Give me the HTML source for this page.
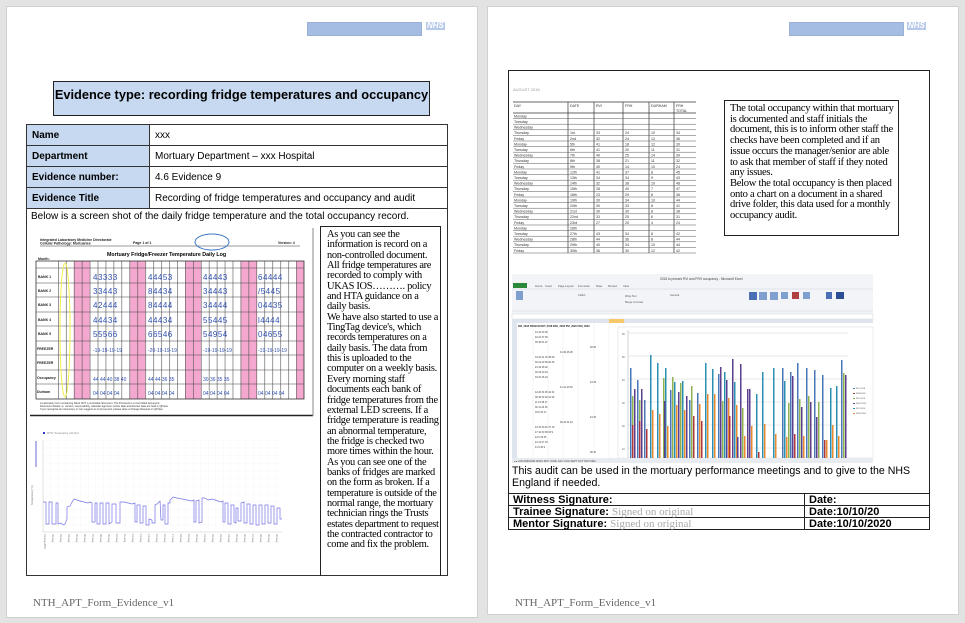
<!DOCTYPE html>
<html><head><meta charset="utf-8">
<style>
*{margin:0;padding:0;box-sizing:border-box}
body{width:965px;height:623px;background:#e3e3e3;position:relative;overflow:hidden;font-family:"Liberation Sans",Arial,sans-serif;color:#000}
.a{position:absolute}
.page{position:absolute;background:#fff;border:1px solid #d0d0d0}
.bar{position:absolute;background:#a5bde3;border:1px solid #9ab0d6}
.nhs{position:absolute;font:bold italic 8px "Liberation Sans",sans-serif;color:#fff;background:#b6c9ea;padding:0 1px;line-height:8px}
.foot{position:absolute;font:11px "Liberation Serif",serif;color:#666}
.serif{font-family:"Liberation Serif",serif}
table.t{position:absolute;border-collapse:collapse}
table.t td{border:1px solid #333;font-size:10px;padding:0 5px;height:21px}
table.t td.l{background:#c6d9f1;font-weight:bold;width:123px}
.sig td{font-size:11px!important;font-weight:bold;height:12px!important;line-height:10px;padding:0 4px!important;border:1px solid #222!important}
.g{color:#aaa;font-weight:normal;font-family:"Liberation Serif",serif}
</style></head><body>

<!-- LEFT PAGE -->
<div class="page" style="left:6px;top:6px;width:472px;height:612px"></div>
<div class="bar" style="left:307px;top:22px;width:115px;height:14px"></div>
<div class="nhs" style="left:426px;top:22px">NHS</div>
<div class="a" style="left:53px;top:81px;width:377px;height:35px;background:#c6d9f1;border:1px solid #222;font-weight:bold;font-size:12.8px;text-align:center;padding-top:5px;white-space:nowrap">Evidence type: recording fridge temperatures and occupancy</div>

<table class="t" style="left:26px;top:124px;width:422px">
<tr><td class="l">Name</td><td>xxx</td></tr>
<tr><td class="l">Department</td><td>Mortuary Department – xxx Hospital</td></tr>
<tr><td class="l">Evidence number:</td><td>4.6 Evidence 9</td></tr>
<tr><td class="l">Evidence Title</td><td>Recording of fridge temperatures and occupancy and audit</td></tr>
</table>
<div class="a" style="left:26px;top:207px;width:422px;height:369px;border:1px solid #333;border-top:none"></div>
<div class="a" style="left:31px;top:211px;font-size:10px">Below is a screen shot of the daily fridge temperature and the total occupancy record.</div>

<!-- text box -->
<div class="a serif" style="left:320px;top:226px;width:121px;height:350px;border:1px solid #222;border-bottom:none;padding:3px 0 0 6px;font-size:10.4px;line-height:10.35px;letter-spacing:-0.3px;overflow:hidden">As you can see the information is record on a non-controlled document. All fridge temperatures are recorded to comply with UKAS IOS………. policy and HTA guidance on a daily basis.<br>We have also started to use a TingTag device's, which records temperatures on a daily basis. The data from this is uploaded to the computer on a weekly basis. Every morning staff documents each bank of fridge temperatures from the external LED screens. If a fridge temperature is reading an abnormal temperature, the fridge is checked two more times within the hour.<br>As you can see one of the banks of fridges are marked on the form as broken. If a temperature is outside of the normal range, the mortuary technician rings the Trusts estates department to request the contracted contractor to come and fix the problem.</div>

<!-- form image -->
<svg class="a" style="left:30px;top:226px" width="285" height="192" viewBox="30 226 285 192">
<defs>
<pattern id="vc" x="58" y="0" width="7.94" height="10" patternUnits="userSpaceOnUse"><rect x="0" y="0" width="0.6" height="10" fill="#555"/></pattern>
</defs>
<rect x="30" y="226" width="283" height="190" fill="#fff"/>
<line x1="30" y1="415.5" x2="313" y2="415.5" stroke="#222" stroke-width="1.5"/>
<line x1="313" y1="228" x2="313" y2="416" stroke="#888"/>
<g fill="#f4a8cf">
<rect x="73.9" y="261" width="15.9" height="138"/><rect x="129.5" y="261" width="15.9" height="138"/><rect x="185" y="261" width="15.9" height="138"/><rect x="240.6" y="261" width="15.9" height="138"/><rect x="296.2" y="261" width="7.9" height="138"/>
</g>
<rect x="58" y="261" width="246" height="138" fill="url(#vc)"/>
<rect x="36" y="261" width="268" height="138" fill="none" stroke="#333" stroke-width="0.8"/>
<g stroke="#444" stroke-width="0.6">
<line x1="36" y1="268" x2="304" y2="268"/><line x1="36" y1="283" x2="304" y2="283"/><line x1="36" y1="297" x2="304" y2="297"/><line x1="36" y1="312" x2="304" y2="312"/><line x1="36" y1="326" x2="304" y2="326"/><line x1="36" y1="341" x2="304" y2="341"/><line x1="36" y1="355" x2="304" y2="355"/><line x1="36" y1="370" x2="304" y2="370"/><line x1="36" y1="384" x2="304" y2="384"/>
</g>
<g font-size="3.5" font-family="Liberation Sans" font-weight="bold" fill="#222">
<text x="40" y="241">Integrated Laboratory Medicine Directorate</text><text x="40" y="244.5">Cellular Pathology: Mortuaries</text>
<text x="133" y="244">Page 1 of 1</text><text x="278" y="244">Version: 4</text>
<text x="38" y="260">Month:</text>
<text x="38" y="278">BANK 1</text><text x="38" y="292">BANK 2</text><text x="38" y="306">BANK 3</text><text x="38" y="321">BANK 4</text><text x="38" y="335">BANK 5</text><text x="37" y="350">FREEZER</text><text x="37" y="364">FREEZER</text><text x="37" y="379">Occupancy</text><text x="37" y="393">Durham</text>
</g>
<line x1="40" y1="246" x2="300" y2="246" stroke="#333" stroke-width="0.5"/>
<text x="107" y="256" font-size="5.3" font-weight="bold" font-family="Liberation Sans">Mortuary Fridge/Freezer Temperature Daily Log</text>
<ellipse cx="212" cy="242" rx="17" ry="8" fill="none" stroke="#3b78c4" stroke-width="1"/>
<ellipse cx="65" cy="330" rx="5" ry="67" fill="none" stroke="#f2f04a" stroke-width="1"/>
<g font-size="8" fill="#3050b0" font-family="Liberation Sans" letter-spacing="0.5">
<text x="93" y="280">43333</text><text x="148" y="280">44453</text><text x="203" y="280">44443</text><text x="258" y="280">64444</text>
<text x="93" y="294">33443</text><text x="148" y="294">84434</text><text x="203" y="294">34443</text><text x="258" y="294">/5445</text>
<text x="93" y="308">42444</text><text x="148" y="308">84444</text><text x="203" y="308">34444</text><text x="258" y="308">04435</text>
<text x="93" y="323">44434</text><text x="148" y="323">44434</text><text x="203" y="323">55445</text><text x="258" y="323">l4444</text>
<text x="93" y="337">55566</text><text x="148" y="337">66546</text><text x="203" y="337">54954</text><text x="258" y="337">04655</text>
</g>
<g font-size="5" fill="#3050b0"><text x="93" y="352">-19-19-19-19</text><text x="148" y="352">-20-19-19-19</text><text x="203" y="352">-19-19-19-19</text><text x="258" y="352">-19-19-19-19</text>
<text x="93" y="381">44 44 40 38 40</text><text x="148" y="381">44 44 36 35</text><text x="203" y="381">30 36 35 35</text>
<text x="93" y="395">04 04 04 04</text><text x="148" y="395">04 04 04 04</text><text x="203" y="395">04 04 04 04</text><text x="258" y="395">04 04 04 04</text></g>
<g font-size="2.6" fill="#333"><text x="40" y="404">A Laboratory form containing blank NOT a controlled document. The Protocols is a Controlled document.</text><text x="40" y="407">Document details i.e. version, responsibility, calendar approver, Active date and Review date are held in QPulse</text><text x="40" y="410">If you recognise an inaccuracy or can suggest an improvement, please raise a Change Request on QPulse</text></g>
</svg>

<!-- temperature graph -->
<svg class="a" style="left:30px;top:425px" width="260" height="130" viewBox="30 425 260 130">
<defs><pattern id="gg" x="43" y="440" width="7.5" height="7.7" patternUnits="userSpaceOnUse"><path d="M0 0H7.5M0 0V7.7" stroke="#efefef" stroke-width="0.5" fill="none"/></pattern></defs>
<rect x="43" y="440" width="239" height="92" fill="url(#gg)"/>
<line x1="43" y1="440" x2="43" y2="532" stroke="#ccc" stroke-width="0.5"/>
<line x1="43" y1="532" x2="282" y2="532" stroke="#ccc" stroke-width="0.5"/>
<rect x="43" y="432" width="2" height="2" fill="#33c"/><text x="47" y="434" font-size="2.5" fill="#888">MTW: Temperature (oC) Ref:</text>
<line x1="36" y1="441" x2="36" y2="467" stroke="#44c" stroke-width="0.8"/>
<polyline fill="none" stroke="#7474e4" stroke-width="0.7" points="43,502 46,502 46,524 49,524 49,502 52,502 52,524 56,524 56,503 58,503 58,524 61,523 63,525 65,524 67,519 67,507 70,506 72,502 74,499 77,500 80,501 84,502 88,503 90,502 92,503 92,522 95,522 95,503 97,503 97,524 100,524 100,503 103,503 103,524 106,524 106,503 109,503 109,524 112,522 112,504 116,504 116,523 120,523 120,502 124,502 128,503 132,504 135,503 135,522 137,522 137,505 140,505 140,523 143,523 143,506 146,506 146,525 149,525 149,519 152,520 152,523 155,523 155,505 157,504 160,501 161,520 163,520 163,505 165,505 165,524 168,524 168,503 170,503 170,500 173,497 177,498 182,499 187,500 192,501 194,500 194,522 196,522 196,501 199,500 199,523 202,522 202,498 205,498 208,500 212,499 215,500 218,501 221,502 223,501 223,522 225,522 225,503 228,503 228,524 231,524 231,505 234,505 234,522 236,523 236,508 238,508 238,521 241,521 241,503 244,502 244,523 247,523 247,504 250,504 250,524 253,524 253,505 256,505 256,525 259,525 259,505 262,505 262,524 265,524 265,505 268,505 268,523 271,523 271,506 274,506 274,524 277,524 277,508 280,508 280,519 282,519"/>
<g font-size="2.6" fill="#777">
<text x="44" y="534" transform="rotate(90 44 534)">01-Aug-2019</text><text x="52" y="534" transform="rotate(90 52 534)">02-Aug</text><text x="60" y="534" transform="rotate(90 60 534)">03-Aug</text><text x="68" y="534" transform="rotate(90 68 534)">04-Aug</text><text x="76" y="534" transform="rotate(90 76 534)">05-Aug</text><text x="84" y="534" transform="rotate(90 84 534)">06-Aug</text><text x="92" y="534" transform="rotate(90 92 534)">07-Aug</text><text x="100" y="534" transform="rotate(90 100 534)">08-Aug</text><text x="108" y="534" transform="rotate(90 108 534)">09-Aug</text><text x="116" y="534" transform="rotate(90 116 534)">10-Aug</text><text x="124" y="534" transform="rotate(90 124 534)">11-Aug</text><text x="132" y="534" transform="rotate(90 132 534)">12-Aug</text><text x="140" y="534" transform="rotate(90 140 534)">13-Aug</text><text x="148" y="534" transform="rotate(90 148 534)">14-Aug</text><text x="156" y="534" transform="rotate(90 156 534)">15-Aug</text><text x="164" y="534" transform="rotate(90 164 534)">16-Aug</text><text x="172" y="534" transform="rotate(90 172 534)">17-Aug</text><text x="180" y="534" transform="rotate(90 180 534)">18-Aug</text><text x="188" y="534" transform="rotate(90 188 534)">19-Aug</text><text x="196" y="534" transform="rotate(90 196 534)">20-Aug</text><text x="204" y="534" transform="rotate(90 204 534)">21-Aug</text><text x="212" y="534" transform="rotate(90 212 534)">22-Aug</text><text x="220" y="534" transform="rotate(90 220 534)">23-Aug</text><text x="228" y="534" transform="rotate(90 228 534)">24-Aug</text><text x="236" y="534" transform="rotate(90 236 534)">25-Aug</text><text x="244" y="534" transform="rotate(90 244 534)">26-Aug</text><text x="252" y="534" transform="rotate(90 252 534)">27-Aug</text><text x="260" y="534" transform="rotate(90 260 534)">28-Aug</text><text x="268" y="534" transform="rotate(90 268 534)">29-Aug</text><text x="276" y="534" transform="rotate(90 276 534)">30-Aug</text>
<text x="33" y="505" transform="rotate(-90 33 505)">Temperature (°C)</text>
</g>
</svg>

<div class="foot" style="left:33px;top:597px">NTH_APT_Form_Evidence_v1</div>

<!-- RIGHT PAGE -->
<div class="page" style="left:487px;top:6px;width:472px;height:609px"></div>
<div class="bar" style="left:789px;top:22px;width:115px;height:14px"></div>
<div class="nhs" style="left:907px;top:22px">NHS</div>
<div class="a" style="left:508px;top:70px;width:422px;height:424px;border:1px solid #222;border-bottom:none"></div>

<!-- occupancy table image -->
<svg class="a" style="left:510px;top:80px" width="190" height="176" viewBox="510 80 190 176">
<text x="513" y="91" font-size="4" fill="#999">AUGUST 2018</text>
<g stroke="#333" stroke-width="0.7">
<line x1="513" y1="102" x2="696" y2="102"/><line x1="513" y1="113" x2="696" y2="113"/>
<line x1="568" y1="102" x2="568" y2="253"/><line x1="594" y1="102" x2="594" y2="253"/><line x1="623" y1="102" x2="623" y2="253"/><line x1="649" y1="102" x2="649" y2="253"/><line x1="674" y1="102" x2="674" y2="253"/>
</g>
<g stroke="#555" stroke-width="0.5">
<line x1="513" y1="118.6" x2="696" y2="118.6"/><line x1="513" y1="124.2" x2="696" y2="124.2"/><line x1="513" y1="129.8" x2="696" y2="129.8"/><line x1="513" y1="135.4" x2="696" y2="135.4"/><line x1="513" y1="141" x2="696" y2="141"/><line x1="513" y1="146.6" x2="696" y2="146.6"/><line x1="513" y1="152.2" x2="696" y2="152.2"/><line x1="513" y1="157.8" x2="696" y2="157.8"/><line x1="513" y1="163.4" x2="696" y2="163.4"/><line x1="513" y1="169" x2="696" y2="169"/><line x1="513" y1="174.6" x2="696" y2="174.6"/><line x1="513" y1="180.2" x2="696" y2="180.2"/><line x1="513" y1="185.8" x2="696" y2="185.8"/><line x1="513" y1="191.4" x2="696" y2="191.4"/><line x1="513" y1="197" x2="696" y2="197"/><line x1="513" y1="202.6" x2="696" y2="202.6"/><line x1="513" y1="208.2" x2="696" y2="208.2"/><line x1="513" y1="213.8" x2="696" y2="213.8"/><line x1="513" y1="219.4" x2="696" y2="219.4"/><line x1="513" y1="225" x2="696" y2="225"/><line x1="513" y1="230.6" x2="696" y2="230.6"/><line x1="513" y1="236.2" x2="696" y2="236.2"/><line x1="513" y1="241.8" x2="696" y2="241.8"/><line x1="513" y1="247.4" x2="696" y2="247.4"/><line x1="513" y1="253" x2="696" y2="253"/>
</g>
<g font-size="3.6" fill="#333">
<text x="514" y="107">DAY</text><text x="570" y="107">DATE</text><text x="596" y="107">RVI</text><text x="625" y="107">FRH</text><text x="651" y="107">DURHAM</text><text x="676" y="107">FRH</text><text x="676" y="112">TOTAL</text>
<text x="514" y="117.5">Monday</text><text x="514" y="123">Tuesday</text><text x="514" y="128.6">Wednesday</text><text x="514" y="134.2">Thursday</text><text x="514" y="139.8">Friday</text><text x="514" y="145.4">Monday</text><text x="514" y="151">Tuesday</text><text x="514" y="156.6">Wednesday</text><text x="514" y="162.2">Thursday</text><text x="514" y="167.8">Friday</text><text x="514" y="173.4">Monday</text><text x="514" y="179">Tuesday</text><text x="514" y="184.6">Wednesday</text><text x="514" y="190.2">Thursday</text><text x="514" y="195.8">Friday</text><text x="514" y="201.4">Monday</text><text x="514" y="207">Tuesday</text><text x="514" y="212.6">Wednesday</text><text x="514" y="218.2">Thursday</text><text x="514" y="223.8">Friday</text><text x="514" y="229.4">Monday</text><text x="514" y="235">Tuesday</text><text x="514" y="240.6">Wednesday</text><text x="514" y="246.2">Thursday</text><text x="514" y="251.8">Friday</text>
<text x="570" y="134.2">1st</text><text x="570" y="139.8">2nd</text><text x="570" y="145.4">5th</text><text x="570" y="151">6th</text><text x="570" y="156.6">7th</text><text x="570" y="162.2">8th</text><text x="570" y="167.8">9th</text><text x="570" y="173.4">12th</text><text x="570" y="179">13th</text><text x="570" y="184.6">14th</text><text x="570" y="190.2">15th</text><text x="570" y="195.8">16th</text><text x="570" y="201.4">19th</text><text x="570" y="207">20th</text><text x="570" y="212.6">21st</text><text x="570" y="218.2">22nd</text><text x="570" y="223.8">23rd</text><text x="570" y="229.4">26th</text><text x="570" y="235">27th</text><text x="570" y="240.6">28th</text><text x="570" y="246.2">29th</text><text x="570" y="251.8">30th</text>
<text x="596" y="134.2">33</text><text x="596" y="139.8">32</text><text x="596" y="145.4">41</text><text x="596" y="151">41</text><text x="596" y="156.6">40</text><text x="596" y="162.2">38</text><text x="596" y="167.8">40</text><text x="596" y="173.4">41</text><text x="596" y="179">34</text><text x="596" y="184.6">32</text><text x="596" y="190.2">28</text><text x="596" y="195.8">23</text><text x="596" y="201.4">30</text><text x="596" y="207">30</text><text x="596" y="212.6">30</text><text x="596" y="218.2">33</text><text x="596" y="223.8">27</text><text x="596" y="235">43</text><text x="596" y="240.6">44</text><text x="596" y="246.2">40</text><text x="596" y="251.8">36</text>
<text x="625" y="134.2">24</text><text x="625" y="139.8">24</text><text x="625" y="145.4">18</text><text x="625" y="151">20</text><text x="625" y="156.6">25</text><text x="625" y="162.2">21</text><text x="625" y="167.8">14</text><text x="625" y="173.4">37</text><text x="625" y="179">34</text><text x="625" y="184.6">38</text><text x="625" y="190.2">40</text><text x="625" y="195.8">29</text><text x="625" y="201.4">34</text><text x="625" y="207">33</text><text x="625" y="212.6">30</text><text x="625" y="218.2">25</text><text x="625" y="223.8">20</text><text x="625" y="235">34</text><text x="625" y="240.6">36</text><text x="625" y="246.2">34</text><text x="625" y="251.8">30</text>
<text x="651" y="134.2">10</text><text x="651" y="139.8">12</text><text x="651" y="145.4">12</text><text x="651" y="151">11</text><text x="651" y="156.6">14</text><text x="651" y="162.2">11</text><text x="651" y="167.8">10</text><text x="651" y="173.4">8</text><text x="651" y="179">9</text><text x="651" y="184.6">10</text><text x="651" y="190.2">7</text><text x="651" y="195.8">8</text><text x="651" y="201.4">10</text><text x="651" y="207">8</text><text x="651" y="212.6">8</text><text x="651" y="218.2">6</text><text x="651" y="223.8">4</text><text x="651" y="235">8</text><text x="651" y="240.6">8</text><text x="651" y="246.2">10</text><text x="651" y="251.8">12</text>
<text x="676" y="134.2">34</text><text x="676" y="139.8">36</text><text x="676" y="145.4">30</text><text x="676" y="151">31</text><text x="676" y="156.6">39</text><text x="676" y="162.2">32</text><text x="676" y="167.8">24</text><text x="676" y="173.4">45</text><text x="676" y="179">43</text><text x="676" y="184.6">48</text><text x="676" y="190.2">47</text><text x="676" y="195.8">36</text><text x="676" y="201.4">44</text><text x="676" y="207">41</text><text x="676" y="212.6">38</text><text x="676" y="218.2">31</text><text x="676" y="223.8">24</text><text x="676" y="235">42</text><text x="676" y="240.6">44</text><text x="676" y="246.2">44</text><text x="676" y="251.8">42</text>
</g>
</svg>

<div class="a serif" style="left:724px;top:100px;width:175px;height:136px;border:1px solid #222;padding:3px 0 0 5px;font-size:10.6px;line-height:10.7px;letter-spacing:-0.3px">The total occupancy within that mortuary is documented and staff initials the document, this is to inform other staff the checks have been completed and if an issue occurs the manager/senior are able to ask that member of staff if they noted any issues.<br>Below the total occupancy is then placed onto a chart on a document in a shared drive folder, this data used for a monthly occupancy audit.</div>

<!-- Excel screenshot -->
<svg class="a" style="left:511px;top:273px" width="364" height="192" viewBox="511 273 364 192">
<rect x="512" y="274" width="361" height="190" fill="#fff"/>
<rect x="512" y="274" width="361" height="40" fill="#f2f4f7"/>
<text x="660" y="280" font-size="3.2" fill="#444">2018 to present RVI and FRH occupancy - Microsoft Excel</text>
<rect x="513" y="283" width="14" height="5" fill="#2a8a3a"/>
<g font-size="2.8" fill="#555"><text x="535" y="287">Home</text><text x="545" y="287">Insert</text><text x="558" y="287">Page Layout</text><text x="578" y="287">Formulas</text><text x="596" y="287">Data</text><text x="608" y="287">Review</text><text x="623" y="287">View</text></g>
<line x1="512" y1="289" x2="873" y2="289" stroke="#c8d0dc" stroke-width="0.5"/>
<g fill="#7fa0cf"><rect x="516" y="291" width="7" height="9"/><rect x="749" y="292" width="8" height="8" fill="#4a6fb5"/><rect x="759" y="292" width="8" height="8"/><rect x="770" y="292" width="8" height="8"/><rect x="781" y="292" width="7" height="7"/><rect x="792" y="292" width="7" height="7" fill="#b04040"/><rect x="803" y="292" width="7" height="7"/><rect x="826" y="292" width="6" height="7" fill="#4a6fb5"/><rect x="836" y="292" width="8" height="7" fill="#2a4f95"/></g>
<g font-size="2.6" fill="#555"><text x="578" y="296">Calibri</text><text x="670" y="296">General</text><text x="625" y="297">Wrap Text</text><text x="625" y="303">Merge &amp; Center</text></g>
<line x1="512" y1="311" x2="873" y2="311" stroke="#c8d0dc" stroke-width="0.5"/>
<rect x="512" y="314" width="361" height="5" fill="#fff" stroke="#ccc" stroke-width="0.4"/>
<rect x="512" y="319" width="361" height="4" fill="#dfe5ee"/>
<rect x="609" y="319" width="15" height="4" fill="#f5c96a"/>
<rect x="512" y="323" width="5" height="136" fill="#dfe5ee"/>
<g stroke="#e2e2e2" stroke-width="0.4">
<line x1="533" y1="323" x2="533" y2="458"/><line x1="548" y1="323" x2="548" y2="458"/><line x1="563" y1="323" x2="563" y2="458"/><line x1="578" y1="323" x2="578" y2="458"/><line x1="594" y1="323" x2="594" y2="458"/><line x1="609" y1="323" x2="609" y2="458"/><line x1="624" y1="323" x2="624" y2="458"/>
</g>
<g font-size="2.5" fill="#222" font-weight="bold"><text x="518" y="327">RVI_2018 FRH2018 RVI_2018 FRH_2018 RVI_2020 FRH_2020</text></g>
<g font-size="2.4" fill="#333" xml:space="preserve">
<text x="535" y="333">44   19   33   36</text><text x="535" y="338">40   22   37   36</text><text x="535" y="343">35   18             51   27</text><text x="590" y="348">48   25</text><text x="560" y="353">41   30   46   28</text><text x="535" y="358">34   24   41   31   38   29</text><text x="535" y="363">30   22   40   39   40   26</text><text x="535" y="368">24   19   38   32</text><text x="535" y="373">30   23   40   24</text><text x="535" y="378">33   22             46   24</text><text x="590" y="383">43   33</text><text x="560" y="388">41   41   40   40</text><text x="535" y="393">42   26   34   45   42   32</text><text x="535" y="398">38   18   32   49   41   29</text><text x="535" y="403">11   15   28   47</text><text x="535" y="408">36   11   23   36</text><text x="535" y="413">33    8             43   17</text><text x="590" y="418">44   15</text><text x="560" y="423">30   44   34   24</text><text x="535" y="428">43   10   30   41   37   15</text><text x="535" y="433">47   10   30   38   33    9</text><text x="535" y="438">44    5   33   35</text><text x="535" y="443">43   12   27   24</text><text x="535" y="448">41    9             36    9</text><text x="590" y="453">38   16</text>
</g>
<rect x="618" y="327" width="255" height="131" fill="#fff" stroke="#d8d8d8" stroke-width="0.5"/>
<g stroke="#d0d0d0" stroke-width="0.5"><line x1="628" y1="333" x2="848" y2="333"/><line x1="628" y1="356" x2="848" y2="356"/><line x1="628" y1="379" x2="848" y2="379"/><line x1="628" y1="402" x2="848" y2="402"/><line x1="628" y1="425" x2="848" y2="425"/><line x1="628" y1="448" x2="848" y2="448"/></g>
<line x1="628" y1="330" x2="628" y2="458" stroke="#aaa" stroke-width="0.5"/>
<g font-size="2.4" fill="#555"><text x="622" y="335">60</text><text x="622" y="358">50</text><text x="622" y="381">40</text><text x="622" y="404">30</text><text x="622" y="427">20</text><text x="622" y="450">10</text></g>
<g>
<rect x="630" y="368" width="1.5" height="90" fill="#4a76b8"/><rect x="632" y="396" width="1.5" height="62" fill="#8fb04f"/><rect x="634" y="389" width="1.5" height="69" fill="#5b3e8e"/><rect x="632" y="425" width="1.5" height="33" fill="#b0363a"/>
<rect x="637" y="380" width="1.5" height="78" fill="#4a76b8"/><rect x="639" y="400" width="1.5" height="58" fill="#8fb04f"/><rect x="641" y="389" width="1.5" height="69" fill="#5b3e8e"/><rect x="639" y="421" width="1.5" height="37" fill="#b0363a"/>
<rect x="644" y="400" width="1.5" height="58" fill="#4a76b8"/><rect x="646" y="429" width="1.5" height="29" fill="#b0363a"/>
<rect x="650" y="355" width="1.5" height="103" fill="#2a8fb0"/><rect x="652" y="410" width="1.5" height="48" fill="#e88a2e"/>
<rect x="657" y="363" width="1.5" height="95" fill="#2a8fb0"/><rect x="659" y="414" width="1.5" height="44" fill="#e88a2e"/>
<rect x="663" y="378" width="1.5" height="80" fill="#8fb04f"/><rect x="665" y="368" width="1.5" height="90" fill="#2a8fb0"/><rect x="667" y="426" width="1.5" height="32" fill="#e88a2e"/><rect x="664" y="401" width="1.5" height="57" fill="#5b3e8e"/>
<rect x="670" y="390" width="1.5" height="68" fill="#4a76b8"/><rect x="672" y="377" width="1.5" height="81" fill="#8fb04f"/><rect x="674" y="382" width="1.5" height="76" fill="#2a8fb0"/><rect x="676" y="405" width="1.5" height="53" fill="#e88a2e"/>
<rect x="678" y="392" width="1.5" height="66" fill="#5b3e8e"/><rect x="680" y="383" width="1.5" height="75" fill="#8fb04f"/><rect x="682" y="381" width="1.5" height="77" fill="#2a8fb0"/><rect x="684" y="410" width="1.5" height="48" fill="#e88a2e"/><rect x="686" y="396" width="1.5" height="62" fill="#5b3e8e"/>
<rect x="689" y="400" width="1.5" height="58" fill="#4a76b8"/><rect x="691" y="386" width="1.5" height="72" fill="#8fb04f"/><rect x="693" y="416" width="1.5" height="42" fill="#b0363a"/>
<rect x="697" y="393" width="1.5" height="65" fill="#4a76b8"/><rect x="699" y="404" width="1.5" height="54" fill="#e88a2e"/><rect x="701" y="421" width="1.5" height="37" fill="#b0363a"/>
<rect x="705" y="363" width="1.5" height="95" fill="#2a8fb0"/><rect x="707" y="394" width="1.5" height="64" fill="#e88a2e"/>
<rect x="712" y="369" width="1.5" height="89" fill="#2a8fb0"/><rect x="714" y="394" width="1.5" height="64" fill="#e88a2e"/>
<rect x="718" y="374" width="1.5" height="84" fill="#4a76b8"/><rect x="720" y="367" width="1.5" height="91" fill="#5b3e8e"/><rect x="722" y="401" width="1.5" height="57" fill="#8fb04f"/>
<rect x="724" y="372" width="1.5" height="86" fill="#2a8fb0"/><rect x="726" y="380" width="1.5" height="78" fill="#5b3e8e"/><rect x="728" y="398" width="1.5" height="60" fill="#e88a2e"/><rect x="729" y="416" width="1.5" height="42" fill="#b0363a"/>
<rect x="732" y="359" width="1.5" height="99" fill="#5b3e8e"/><rect x="734" y="382" width="1.5" height="76" fill="#2a8fb0"/><rect x="736" y="405" width="1.5" height="53" fill="#e88a2e"/><rect x="737" y="437" width="1.5" height="21" fill="#5b3e8e"/>
<rect x="740" y="364" width="1.5" height="94" fill="#5b3e8e"/><rect x="742" y="408" width="1.5" height="50" fill="#8fb04f"/><rect x="744" y="436" width="1.5" height="22" fill="#e88a2e"/>
<rect x="747" y="389" width="1.5" height="69" fill="#5b3e8e"/><rect x="749" y="389" width="1.5" height="69" fill="#5b3e8e"/><rect x="751" y="426" width="1.5" height="32" fill="#e88a2e"/>
<rect x="756" y="394" width="1.5" height="64" fill="#2a8fb0"/><rect x="758" y="452" width="1.5" height="6" fill="#b0363a"/>
<rect x="762" y="372" width="1.5" height="86" fill="#2a8fb0"/><rect x="764" y="424" width="1.5" height="34" fill="#e88a2e"/>
<rect x="773" y="368" width="1.5" height="90" fill="#2a8fb0"/><rect x="775" y="434" width="1.5" height="24" fill="#e88a2e"/>
<rect x="782" y="368" width="1.5" height="90" fill="#4a76b8"/><rect x="784" y="381" width="1.5" height="77" fill="#2a8fb0"/><rect x="786" y="437" width="1.5" height="21" fill="#e88a2e"/><rect x="788" y="403" width="1.5" height="55" fill="#8fb04f"/>
<rect x="790" y="372" width="1.5" height="86" fill="#4a76b8"/><rect x="792" y="376" width="1.5" height="82" fill="#5b3e8e"/><rect x="794" y="434" width="1.5" height="24" fill="#b0363a"/>
<rect x="797" y="363" width="1.5" height="95" fill="#4a76b8"/><rect x="799" y="399" width="1.5" height="59" fill="#8fb04f"/><rect x="801" y="407" width="1.5" height="51" fill="#5b3e8e"/><rect x="803" y="436" width="1.5" height="22" fill="#e88a2e"/>
<rect x="806" y="368" width="1.5" height="90" fill="#4a76b8"/><rect x="808" y="396" width="1.5" height="62" fill="#8fb04f"/><rect x="810" y="402" width="1.5" height="56" fill="#5b3e8e"/>
<rect x="814" y="370" width="1.5" height="88" fill="#4a76b8"/><rect x="816" y="417" width="1.5" height="41" fill="#5b3e8e"/><rect x="818" y="402" width="1.5" height="56" fill="#8fb04f"/>
<rect x="822" y="375" width="1.5" height="83" fill="#4a76b8"/><rect x="824" y="440" width="1.5" height="18" fill="#b0363a"/><rect x="826" y="440" width="1.5" height="18" fill="#e88a2e"/>
<rect x="830" y="388" width="1.5" height="70" fill="#2a8fb0"/><rect x="832" y="425" width="1.5" height="33" fill="#e88a2e"/>
<rect x="836" y="386" width="1.5" height="72" fill="#2a8fb0"/><rect x="838" y="436" width="1.5" height="22" fill="#e88a2e"/>
<rect x="841" y="360" width="1.5" height="98" fill="#4a76b8"/><rect x="843" y="373" width="1.5" height="85" fill="#8fb04f"/><rect x="845" y="375" width="1.5" height="83" fill="#5b3e8e"/>
</g>
<g font-size="2.2" fill="#555"><rect x="853" y="388" width="2" height="1" fill="#4a76b8"/><text x="856" y="389">RVI 2018</text><rect x="853" y="393" width="2" height="1" fill="#b0363a"/><text x="856" y="394">FRH2018</text><rect x="853" y="398" width="2" height="1" fill="#8fb04f"/><text x="856" y="399">RVI 2019</text><rect x="853" y="403" width="2" height="1" fill="#5b3e8e"/><text x="856" y="404">FRH 2019</text><rect x="853" y="408" width="2" height="1" fill="#2a8fb0"/><text x="856" y="409">RVI 2020</text><rect x="853" y="413" width="2" height="1" fill="#e88a2e"/><text x="856" y="414">FRH 2020</text></g>
<rect x="512" y="458" width="361" height="5" fill="#e8ebf0"/>
<text x="514" y="462" font-size="2.6" fill="#444">◂ ▸  JAN  FEB  MAR  APRIL  MAY  JUNE  JULY  AUG  SEPT  OCT  NOV  DEC</text>
</svg>

<div class="a" style="left:512px;top:465px;width:415px;font-size:10.6px;line-height:12px">This audit can be used in the mortuary performance meetings and to give to the NHS England if needed.</div>

<table class="t sig" style="left:508px;top:493px;width:422px">
<tr><td style="width:296px">Witness Signature:</td><td>Date:</td></tr>
<tr><td>Trainee Signature: <span class="g">Signed on original</span></td><td>Date:10/10/20</td></tr>
<tr><td>Mentor Signature: <span class="g">Signed on original</span></td><td>Date:10/10/2020</td></tr>
</table>

<div class="foot" style="left:515px;top:597px">NTH_APT_Form_Evidence_v1</div>
</body></html>
